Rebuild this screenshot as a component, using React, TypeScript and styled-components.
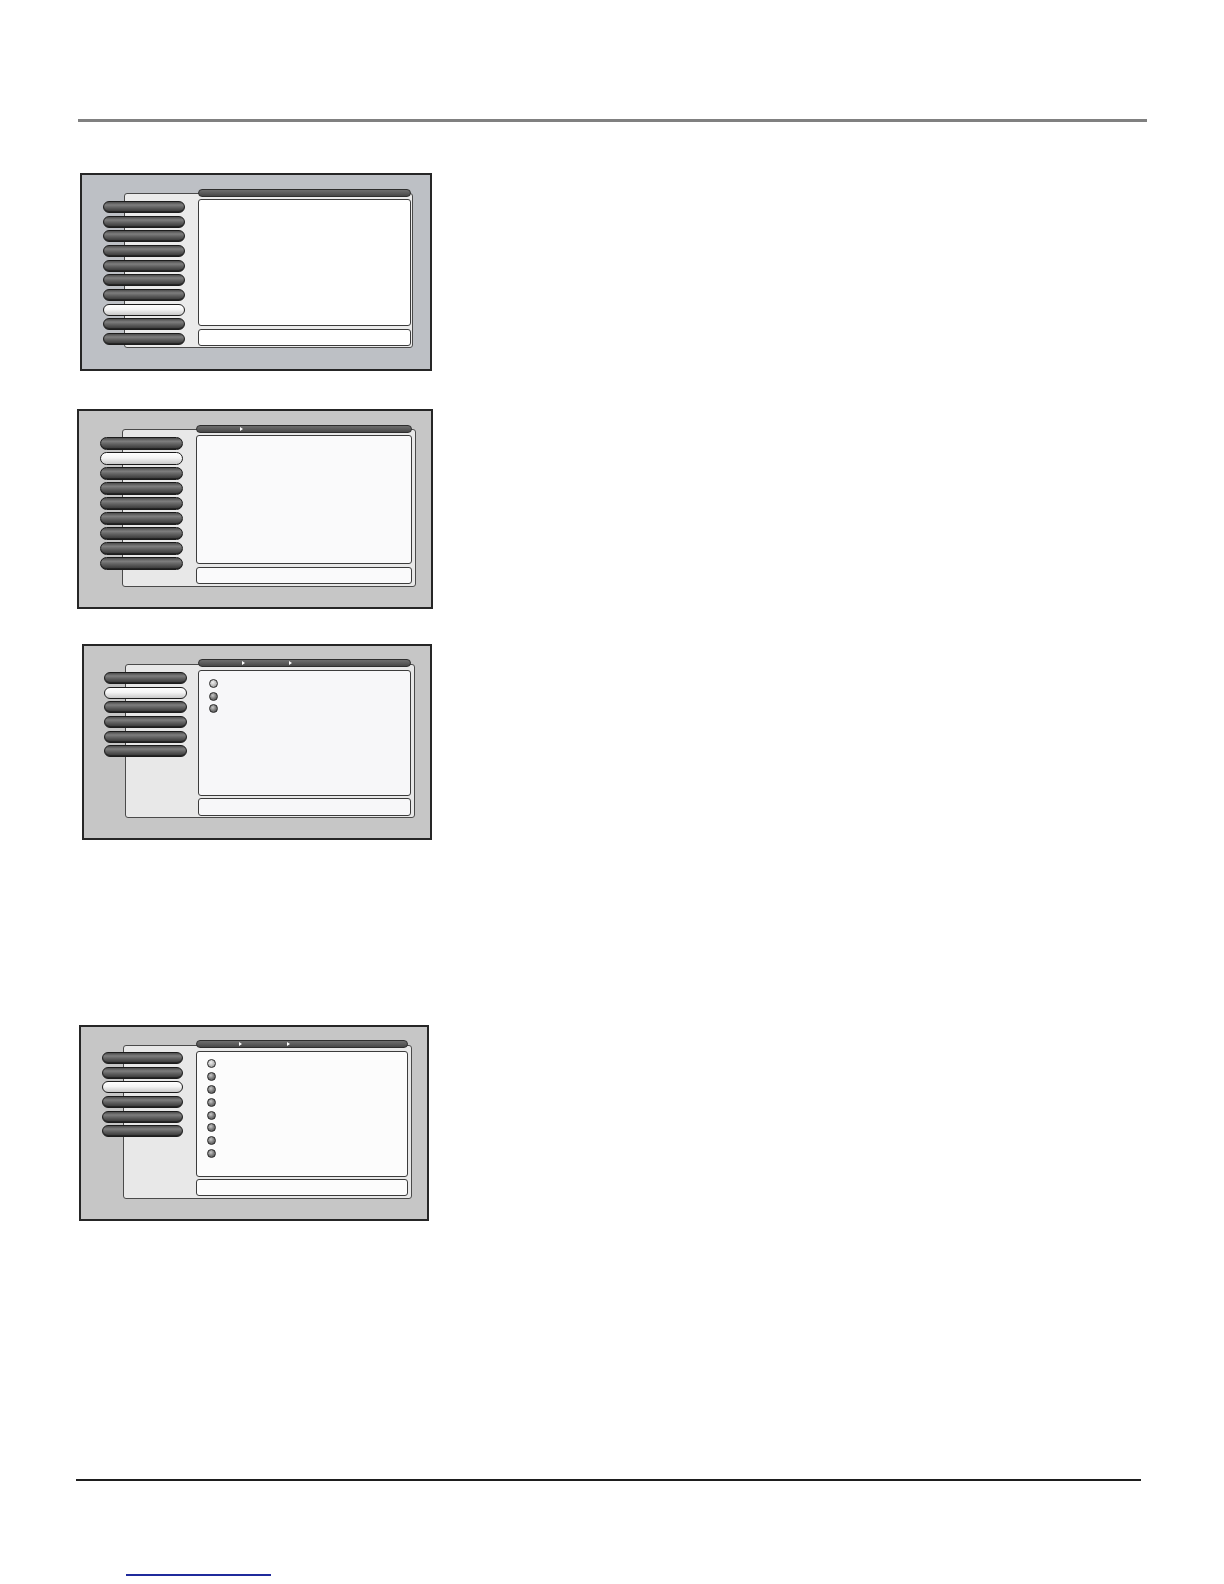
import React from "react";
import styled, { createGlobalStyle } from "styled-components";

const GlobalStyle = createGlobalStyle`
  html, body {
    margin: 0;
    padding: 0;
    background: #ffffff;
    font-family: "Liberation Sans", Arial, sans-serif;
  }
`;

const Page = styled.div`
  width: 1224px;
  height: 1584px;
  padding-top: 119px;
  box-sizing: border-box;
  overflow: hidden;
`;

const TopRule = styled.div`
  margin-left: 78px;
  width: 1069px;
  height: 3px;
  background: #808080;
`;

const Frame = styled.div<{ $mt: number; $ml: number; $w: number; $h: number; $bg: string; $pl: number }>`
  margin-top: ${(p) => p.$mt}px;
  margin-left: ${(p) => p.$ml}px;
  width: ${(p) => p.$w}px;
  height: ${(p) => p.$h}px;
  box-sizing: border-box;
  border: 2px solid #262626;
  background: ${(p) => p.$bg};
  padding: 18px 0 0 ${(p) => p.$pl}px;
`;

const Panel = styled.div<{ $w: number; $h: number; $pr: number; $fill: string }>`
  display: flex;
  width: ${(p) => p.$w}px;
  height: ${(p) => p.$h}px;
  box-sizing: border-box;
  border: 1px solid #4a4a4a;
  border-radius: 3px;
  background: ${(p) => p.$fill};
  padding-right: ${(p) => p.$pr}px;
`;

const Side = styled.div<{ $w: number }>`
  width: ${(p) => p.$w}px;
  flex: none;
`;

const Menu = styled.ul<{ $ml: number; $mt: number; $w: number; $gap: number }>`
  list-style: none;
  margin: ${(p) => p.$mt}px 0 0 ${(p) => p.$ml}px;
  padding: 0;
  width: ${(p) => p.$w}px;
  display: flex;
  flex-direction: column;
  gap: ${(p) => p.$gap}px;
`;

const MenuButton = styled.li<{ $active?: boolean; $h: number }>`
  height: ${(p) => p.$h}px;
  box-sizing: border-box;
  border: 1px solid #1c1c1c;
  border-radius: 7px;
  background: ${(p) =>
    p.$active
      ? "linear-gradient(to bottom, #ffffff 0%, #f4f4f4 45%, #c9c9c9 100%)"
      : "linear-gradient(to bottom, #4c4c4c 0%, #7e7e7e 30%, #5c5c5c 60%, #343434 100%)"};
  box-shadow: ${(p) => (p.$active ? "none" : "inset 0 -1px 0 rgba(0,0,0,0.35)")};
`;

const Main = styled.div<{ $w: number }>`
  width: ${(p) => p.$w}px;
  flex: none;
  display: flex;
  flex-direction: column;
`;

const TitleBar = styled.div<{ $mt: number }>`
  position: relative;
  margin-top: ${(p) => p.$mt}px;
  height: 8px;
  box-sizing: border-box;
  border: 1px solid #2e2e2e;
  border-radius: 4px;
  background: linear-gradient(to bottom, #6e6e6e 0%, #585858 60%, #474747 100%);
`;

const Crumb = styled.span<{ $x: number }>`
  position: absolute;
  top: 1px;
  left: ${(p) => p.$x}px;
  width: 0;
  height: 0;
  border-top: 2.5px solid transparent;
  border-bottom: 2.5px solid transparent;
  border-left: 3px solid #ffffff;
`;

const ContentBox = styled.div<{ $mt: number; $h: number; $bg: string; $pt: number }>`
  margin-top: ${(p) => p.$mt}px;
  height: ${(p) => p.$h}px;
  box-sizing: border-box;
  border: 1px solid #3c3c3c;
  border-radius: 3px;
  background: ${(p) => p.$bg};
  padding: ${(p) => p.$pt}px 0 0 10px;
  display: flex;
  flex-direction: column;
`;

const OptionRow = styled.div<{ $h: number }>`
  height: ${(p) => p.$h}px;
  display: flex;
  align-items: center;
`;

const Radio = styled.span<{ $on?: boolean }>`
  width: 9px;
  height: 9px;
  box-sizing: border-box;
  border-radius: 50%;
  border: 1px solid #2a2a2a;
  background: ${(p) =>
    p.$on
      ? "radial-gradient(circle at 40% 35%, #f0f0f0 0%, #b8b8b8 55%, #7a7a7a 100%)"
      : "radial-gradient(circle at 40% 35%, #c8c8c8 0%, #7a7a7a 50%, #444444 100%)"};
`;

const HelpBox = styled.div<{ $mt: number; $h: number; $bg: string }>`
  margin-top: ${(p) => p.$mt}px;
  height: ${(p) => p.$h}px;
  box-sizing: border-box;
  border: 1px solid #3c3c3c;
  border-radius: 3px;
  background: ${(p) => p.$bg};
`;

const BottomRule = styled.div`
  margin-top: 258px;
  margin-left: 76px;
  width: 1065px;
  height: 2px;
  background: #1e1e1e;
`;

const PageLink = styled.a`
  display: block;
  margin-top: 93px;
  margin-left: 126px;
  width: 145px;
  height: 0;
  border-bottom: 2px solid #1f2a9c;
`;

type Screen = {
  mt: number;
  ml: number;
  w: number;
  h: number;
  bg: string;
  pl: number;
  panelW: number;
  panelH: number;
  panelPr: number;
  panelFill: string;
  sideW: number;
  mainW: number;
  menuMl: number;
  menuMt: number;
  menuW: number;
  btnH: number;
  btnGap: number;
  buttons: number;
  active: number;
  barMt: number;
  crumbs: number[];
  contentMt: number;
  contentH: number;
  contentBg: string;
  optPt: number;
  optH: number;
  options: number;
  helpMt: number;
  helpH: number;
};

const screens: Screen[] = [
  {
    mt: 51, ml: 80, w: 352, h: 198, bg: "#bdc0c5", pl: 42,
    panelW: 289, panelH: 155, panelPr: 1, panelFill: "#ebebeb",
    sideW: 73, mainW: 213, menuMl: -22, menuMt: 7, menuW: 82,
    btnH: 12, btnGap: 2.67, buttons: 10, active: 7, barMt: -5, crumbs: [],
    contentMt: 2, contentH: 127, contentBg: "#ffffff", optPt: 0, optH: 0, options: 0,
    helpMt: 3, helpH: 17,
  },
  {
    mt: 38, ml: 77, w: 356, h: 200, bg: "#c6c6c6", pl: 43,
    panelW: 294, panelH: 158, panelPr: 3, panelFill: "#e8e8e8",
    sideW: 73, mainW: 216, menuMl: -23, menuMt: 7, menuW: 83,
    btnH: 12.5, btnGap: 2.5, buttons: 9, active: 1, barMt: -5, crumbs: [43],
    contentMt: 2, contentH: 129, contentBg: "#fafafb", optPt: 0, optH: 0, options: 0,
    helpMt: 3, helpH: 17,
  },
  {
    mt: 35, ml: 82, w: 350, h: 196, bg: "#c6c6c6", pl: 41,
    panelW: 290, panelH: 154, panelPr: 3, panelFill: "#e8e8e8",
    sideW: 72, mainW: 213, menuMl: -22, menuMt: 7, menuW: 83,
    btnH: 12, btnGap: 2.67, buttons: 6, active: 1, barMt: -6, crumbs: [43, 90],
    contentMt: 3, contentH: 126, contentBg: "#f7f7f9", optPt: 6, optH: 12.7, options: 3,
    helpMt: 2, helpH: 18,
  },
  {
    mt: 185, ml: 79, w: 350, h: 196, bg: "#c6c6c6", pl: 42,
    panelW: 289, panelH: 154, panelPr: 3, panelFill: "#e8e8e8",
    sideW: 72, mainW: 212, menuMl: -22, menuMt: 6, menuW: 81,
    btnH: 12, btnGap: 2.67, buttons: 6, active: 2, barMt: -6, crumbs: [42, 90],
    contentMt: 3, contentH: 126, contentBg: "#fcfcfc", optPt: 5, optH: 12.9, options: 8,
    helpMt: 2, helpH: 17,
  },
];

const MenuScreen: React.FC<{ s: Screen }> = ({ s }) => (
  <Frame $mt={s.mt} $ml={s.ml} $w={s.w} $h={s.h} $bg={s.bg} $pl={s.pl}>
    <Panel $w={s.panelW} $h={s.panelH} $pr={s.panelPr} $fill={s.panelFill}>
      <Side $w={s.sideW}>
        <Menu $ml={s.menuMl} $mt={s.menuMt} $w={s.menuW} $gap={s.btnGap}>
          {Array.from({ length: s.buttons }).map((_, i) => (
            <MenuButton key={i} $h={s.btnH} $active={i === s.active} />
          ))}
        </Menu>
      </Side>
      <Main $w={s.mainW}>
        <TitleBar $mt={s.barMt}>
          {s.crumbs.map((x) => (
            <Crumb key={x} $x={x} />
          ))}
        </TitleBar>
        <ContentBox $mt={s.contentMt} $h={s.contentH} $bg={s.contentBg} $pt={s.optPt}>
          {Array.from({ length: s.options }).map((_, i) => (
            <OptionRow key={i} $h={s.optH}>
              <Radio $on={i === 0} />
            </OptionRow>
          ))}
        </ContentBox>
        <HelpBox $mt={s.helpMt} $h={s.helpH} $bg={s.contentBg} />
      </Main>
    </Panel>
  </Frame>
);

const App: React.FC = () => {
  return (
    <>
      <GlobalStyle />
      <Page>
        <TopRule />
        {screens.map((s, i) => (
          <MenuScreen key={i} s={s} />
        ))}
        <BottomRule />
        <PageLink href="#" aria-label="page link" />
      </Page>
    </>
  );
};

export default App;
